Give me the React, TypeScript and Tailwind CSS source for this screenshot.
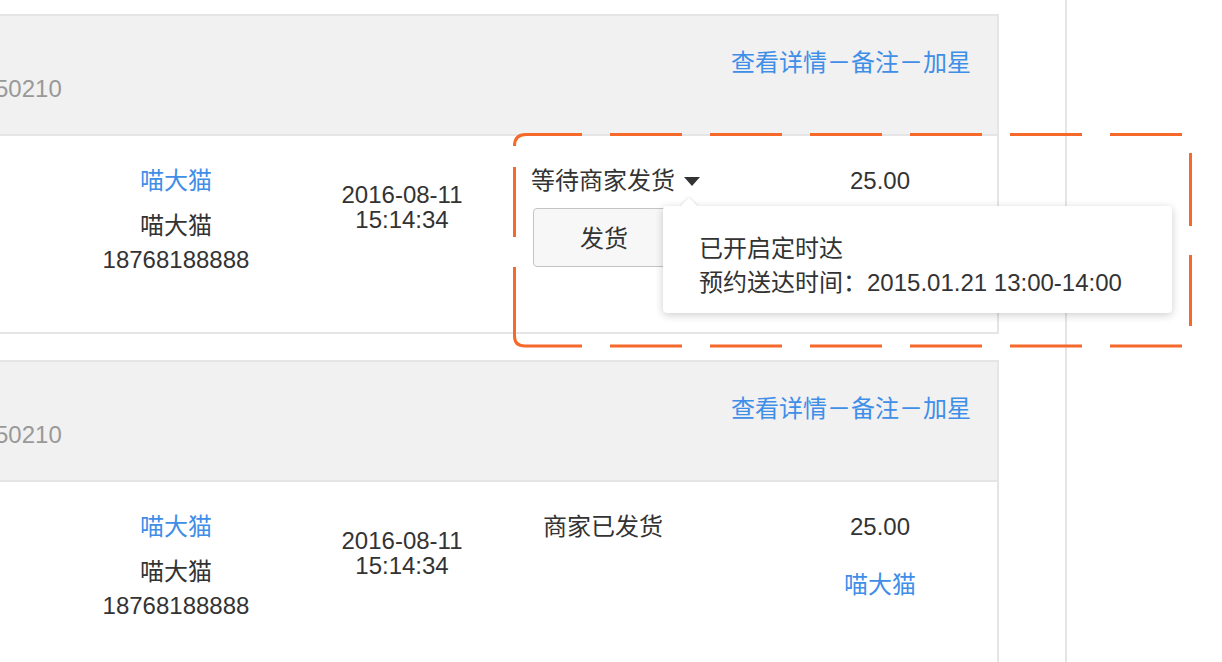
import React from 'react'

const font = { fontFamily: '"Liberation Sans", "Noto Sans CJK SC", sans-serif' }

interface CardProps {
  status: string
  pending?: boolean
  last?: boolean
}

function OrderCard({ status, pending, last }: CardProps) {
  return (
    <div className={`-ml-[10px] w-[1009px] shrink-0 border-2 border-[#e5e5e5] bg-white ${last ? 'mt-[26px]' : 'mt-[14px]'}`}>
      <div className="flex h-[120px] justify-between border-b-2 border-[#e5e5e5] bg-[#f1f1f1]">
        <div className="ml-[3px] mt-[56px] leading-[34px] text-[#999]">50210</div>
        <div className="mr-[26px] mt-[30px] leading-[34px] text-[#3f8ee8]">查看详情－备注－加星</div>
      </div>
      <div className="flex h-[196px]">
        <div className="w-[60px] shrink-0" />
        <div className="flex w-[248px] shrink-0 flex-col items-center pt-[28px] leading-[34px]">
          <span className="text-[#3f8ee8]">喵大猫</span>
          <span className="mt-[11px] text-[#333]">喵大猫</span>
          <span className="text-[#333]">18768188888</span>
        </div>
        <div className="flex w-[204px] shrink-0 flex-col items-center pt-[46px] leading-[25px] text-[#333]">
          <span>2016-08-11</span>
          <span>15:14:34</span>
        </div>
        <div className={`w-[296px] shrink-0 pt-[28px] leading-[34px] text-[#333] ${pending ? 'pl-[27px]' : 'pl-[39px]'}`}>
          <div className="flex h-[34px] items-center">
            <span>{status}</span>
            {pending && (
              <svg className="ml-[9px]" width="16" height="9" viewBox="0 0 16 9">
                <path d="M0 0 L16 0 L8 9 Z" fill="#333" />
              </svg>
            )}
          </div>
          {pending && (
            <button className="ml-[2px] mt-[10px] flex h-[59px] w-[142px] items-center justify-center rounded-[4px] border border-[#c4c4c4] bg-[#f7f7f7] pt-[2px] text-[#333]">
              发货
            </button>
          )}
        </div>
        <div className="flex w-[160px] shrink-0 flex-col items-center pt-[28px] leading-[34px]">
          <span className="text-[#333]">25.00</span>
          <span className="mt-[24px] text-[#3f8ee8]">喵大猫</span>
        </div>
      </div>
    </div>
  )
}

export default function App() {
  const orange = '#f5692a'
  const dashes = [610, 710, 810, 910, 1010, 1110]
  return (
    <div className="relative h-[662px] w-[1222px] overflow-hidden bg-white text-[24px]" style={font}>
      <div className="flex h-full">
        <div className="flex w-[999px] shrink-0 flex-col">
          <OrderCard status="等待商家发货" pending />
          <OrderCard status="商家已发货" last />
        </div>
        <div className="ml-[66px] h-full border-l-2 border-[#e5e5e5]" />
      </div>

      {/* tooltip */}
      <div className="absolute left-[663px] top-[206px] h-[107px] w-[509px] rounded-[4px] bg-white pl-[36px] pt-[26px] leading-[34px] text-[#333] shadow-[0_2px_8px_rgba(0,0,0,0.2)]">
        <div>已开启定时达</div>
        <div>预约送达时间：2015.01.21 13:00-14:00</div>
      </div>
      <div className="absolute left-[677px] top-[196px] h-[10px] w-[24px] overflow-hidden">
        <div className="absolute left-[6px] top-[4px] h-[12px] w-[12px] rotate-45 bg-white shadow-[0_0_3px_rgba(0,0,0,0.18)]" />
      </div>

      {/* dashed highlight */}
      <svg className="pointer-events-none absolute left-0 top-0" width="1222" height="662">
        <g stroke={orange} strokeWidth="3" fill="none">
          <path d="M514.5 146 Q514.5 134.5 526 134.5 L582 134.5" />
          <path d="M514.5 267 L514.5 336 Q514.5 346 525 346 L582 346" />
          <line x1="514.5" y1="167" x2="514.5" y2="237" />
          {dashes.map((x) => (
            <line key={`t${x}`} x1={x} y1="134.5" x2={x + 72} y2="134.5" />
          ))}
          {dashes.map((x) => (
            <line key={`b${x}`} x1={x} y1="346" x2={x + 72} y2="346" />
          ))}
          <line x1="1190.5" y1="153" x2="1190.5" y2="226" />
          <line x1="1190.5" y1="255" x2="1190.5" y2="326" />
        </g>
      </svg>
    </div>
  )
}
